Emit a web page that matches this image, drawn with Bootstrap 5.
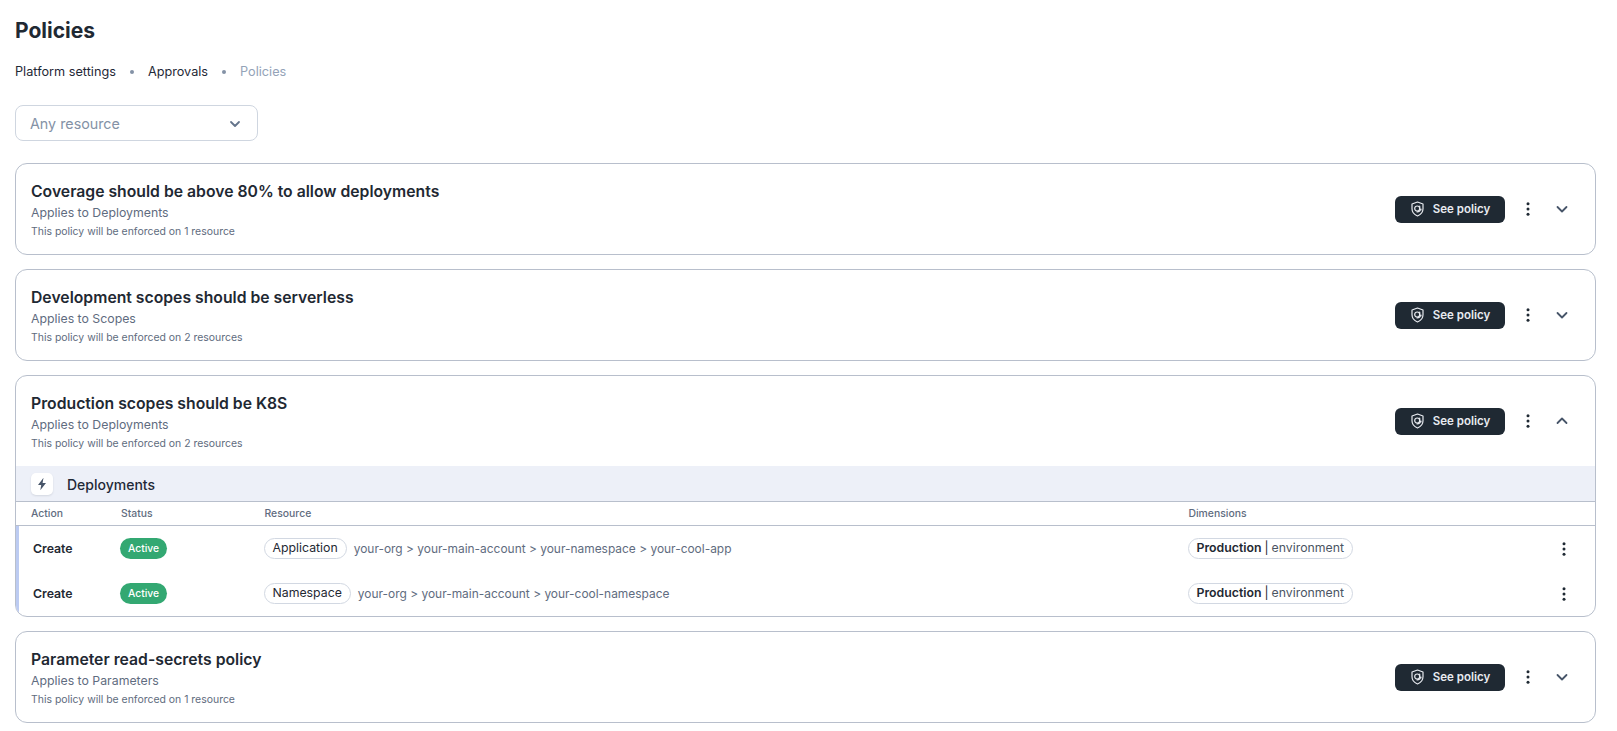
<!DOCTYPE html>
<html lang="en"><head><meta charset="utf-8"><title>Policies</title>
<link href="https://cdn.jsdelivr.net/npm/bootstrap@5.3.0/dist/css/bootstrap.min.css" rel="stylesheet">
<style>
body{font-family:Inter,"Liberation Sans",sans-serif;color:#1f2937;background:#fff;padding:0 21px 0 15px;overflow:hidden}
.pg-title{font-size:21px;font-weight:700;line-height:26px;margin:18px 0 0;color:#1f2933}
.crumbs{font-size:12.700px;line-height:18px;margin-top:19px;gap:14px}
.crumbs .dot{width:4px;height:4px;border-radius:50%;background:#8492a6}
.crumbs .last{color:#94a3b8}
.res-select{width:243px;height:36px;margin-top:24px;border:1px solid #cfd6e0;border-radius:8px;padding:2px 15px 0 14px;font-size:14.300px;color:#8492a6}
.pol{border:1px solid #b8bfcc;border-radius:12px;margin-top:14px;overflow:hidden}
.pol.first{margin-top:22px}
.pol-head{height:90px;padding:0 25px 0 15px}
.pol-txt{padding-top:2px}
.pol-name{font-size:15.750px;font-weight:600;line-height:20px;color:#1f2933}
.pol-sub{font-size:12.300px;line-height:16px;color:#5f6c80;margin-top:3px}
.pol-note{font-size:10.450px;line-height:14px;color:#5f6c80;margin-top:4px}
.see{background:#1f2933;color:#e8ebf0;border-radius:6px;width:110px;height:27px;font-size:11.500px;font-weight:600;gap:8px;margin-right:15px;padding:0;border:0}
.see:hover{background:#1f2933;color:#e8ebf0}
.see-txt{padding-top:1px}
.ico-btn{width:16px;height:16px;margin-right:18px}
.ico-btn:last-child{margin-right:0}
.group-bar{background:#edf0f8;height:36px;border-bottom:1px solid #b8bfcc;padding:2px 0 0 15px;gap:14px;font-size:14px;font-weight:500}
.group-ico{width:22px;height:22px;background:#fff;border-radius:5px;box-shadow:0 1px 2px rgba(31,41,55,.12);margin-top:-2px}
.grid-row{display:grid;align-items:center}
.thead-row{grid-template-columns:90px 143.500px 924px 1fr 48px;height:24px;border-bottom:1px solid #b8bfcc;font-size:10.400px;font-weight:500;color:#5f6c80;padding:1px 0 0 15px}
.tbody-wrap{border-left:3px solid #bccbf2}
.body-row{grid-template-columns:88px 143.500px 924px 1fr 48px;height:45px;padding-left:14px;font-size:12.300px}
.act{font-weight:600;color:#1f2933;padding-top:1px}
.st{background:#33a872;color:#fff;font-size:10.300px;font-weight:500;border-radius:11px;width:47px;height:21px;margin-left:-1px;padding-top:1px}
.chip{border:1px solid #d2d8e2;border-radius:11px;height:21px;padding:0 8px;font-size:12.300px;color:#1f2933;margin-left:-1px}
.path{color:#5f6c80;font-size:11.950px;margin-left:7px}
.chip b{font-weight:600}
.chip .sep{margin:0 3px}
.chip .env{color:#4b5563}
.row-more{justify-self:start;margin-left:9px}
</style></head><body>
<svg width="0" height="0" class="d-block" aria-hidden="true"><defs>
<symbol id="i-shield" viewBox="0 0 15 16"><g fill="none" stroke="#e8ebf0" stroke-width="1.200"><path d="M7.500 1l5.500 2v4.800c0 3.300-2.400 5.900-5.500 7.200-3.100-1.300-5.500-3.900-5.500-7.200V3z" stroke-linejoin="round"/><circle cx="7.200" cy="7.500" r="2.500"/><path d="M9.700 5.200v3.300c0 1 1.300 1 1.300-.3M9.700 10c-.8.600-1.600.9-2.600.9" stroke-linecap="round"/></g></symbol>
<symbol id="i-more" viewBox="0 0 16 16"><g fill="#1f2933"><circle cx="8" cy="2.800" r="1.500"/><circle cx="8" cy="8" r="1.500"/><circle cx="8" cy="13.200" r="1.500"/></g></symbol>
<symbol id="i-down" viewBox="0 0 16 16"><path d="M3.500 6l4.500 4.500L12.500 6" fill="none" stroke="#475569" stroke-width="1.800" stroke-linecap="round" stroke-linejoin="round"/></symbol>
<symbol id="i-up" viewBox="0 0 16 16"><path d="M3.500 10l4.500-4.500L12.500 10" fill="none" stroke="#475569" stroke-width="1.800" stroke-linecap="round" stroke-linejoin="round"/></symbol>
</defs></svg>
<h1 class="pg-title">Policies</h1>
<nav class="crumbs d-flex align-items-center"><span>Platform settings</span><span class="dot"></span><span>Approvals</span><span class="dot"></span><span class="last">Policies</span></nav>
<div class="res-select d-flex align-items-center justify-content-between"><span>Any resource</span>
<svg width="14" height="14" viewBox="0 0 14 14" fill="none" stroke="#64748b" stroke-width="1.800" stroke-linecap="round" stroke-linejoin="round"><path d="M3 5l4 4 4-4"/></svg></div>

<section class="pol first"><div class="pol-head d-flex align-items-center justify-content-between">
<div class="pol-txt"><div class="pol-name">Coverage should be above 80% to allow deployments</div><div class="pol-sub">Applies to Deployments</div><div class="pol-note">This policy will be enforced on 1 resource</div></div>
<div class="d-flex align-items-center"><button class="btn see d-flex align-items-center justify-content-center"><svg width="15" height="16"><use href="#i-shield"/></svg><span class="see-txt">See policy</span></button><svg class="ico-btn"><use href="#i-more"/></svg><svg class="ico-btn"><use href="#i-down"/></svg></div></div></section>

<section class="pol"><div class="pol-head d-flex align-items-center justify-content-between">
<div class="pol-txt"><div class="pol-name">Development scopes should be serverless</div><div class="pol-sub">Applies to Scopes</div><div class="pol-note">This policy will be enforced on 2 resources</div></div>
<div class="d-flex align-items-center"><button class="btn see d-flex align-items-center justify-content-center"><svg width="15" height="16"><use href="#i-shield"/></svg><span class="see-txt">See policy</span></button><svg class="ico-btn"><use href="#i-more"/></svg><svg class="ico-btn"><use href="#i-down"/></svg></div></div></section>

<section class="pol"><div class="pol-head d-flex align-items-center justify-content-between">
<div class="pol-txt"><div class="pol-name">Production scopes should be K8S</div><div class="pol-sub">Applies to Deployments</div><div class="pol-note">This policy will be enforced on 2 resources</div></div>
<div class="d-flex align-items-center"><button class="btn see d-flex align-items-center justify-content-center"><svg width="15" height="16"><use href="#i-shield"/></svg><span class="see-txt">See policy</span></button><svg class="ico-btn"><use href="#i-more"/></svg><svg class="ico-btn"><use href="#i-up"/></svg></div></div>
<div class="group-bar d-flex align-items-center"><span class="group-ico d-flex align-items-center justify-content-center"><svg width="12" height="14" viewBox="0 0 12 14" fill="#475569"><path d="M7.500 0.800L2 8h3.200L4.300 13.200 10 6H6.600z"/></svg></span>Deployments</div>
<div class="grid-row thead-row"><span>Action</span><span>Status</span><span>Resource</span><span>Dimensions</span><span></span></div>
<div class="tbody-wrap">
<div class="grid-row body-row"><span class="act">Create</span><span><span class="st d-inline-flex align-items-center justify-content-center">Active</span></span><span class="d-flex align-items-center"><span class="chip d-inline-flex align-items-center">Application</span><span class="path">your-org &gt; your-main-account &gt; your-namespace &gt; your-cool-app</span></span><span><span class="chip d-inline-flex align-items-center"><b>Production</b><span class="sep">|</span><span class="env">environment</span></span></span><svg class="ico-btn row-more"><use href="#i-more"/></svg></div>
<div class="grid-row body-row"><span class="act">Create</span><span><span class="st d-inline-flex align-items-center justify-content-center">Active</span></span><span class="d-flex align-items-center"><span class="chip d-inline-flex align-items-center">Namespace</span><span class="path">your-org &gt; your-main-account &gt; your-cool-namespace</span></span><span><span class="chip d-inline-flex align-items-center"><b>Production</b><span class="sep">|</span><span class="env">environment</span></span></span><svg class="ico-btn row-more"><use href="#i-more"/></svg></div>
</div></section>

<section class="pol"><div class="pol-head d-flex align-items-center justify-content-between">
<div class="pol-txt"><div class="pol-name">Parameter read-secrets policy</div><div class="pol-sub">Applies to Parameters</div><div class="pol-note">This policy will be enforced on 1 resource</div></div>
<div class="d-flex align-items-center"><button class="btn see d-flex align-items-center justify-content-center"><svg width="15" height="16"><use href="#i-shield"/></svg><span class="see-txt">See policy</span></button><svg class="ico-btn"><use href="#i-more"/></svg><svg class="ico-btn"><use href="#i-down"/></svg></div></div></section>
<script src="https://cdn.jsdelivr.net/npm/bootstrap@5.3.0/dist/js/bootstrap.bundle.min.js"></script>
</body></html>
